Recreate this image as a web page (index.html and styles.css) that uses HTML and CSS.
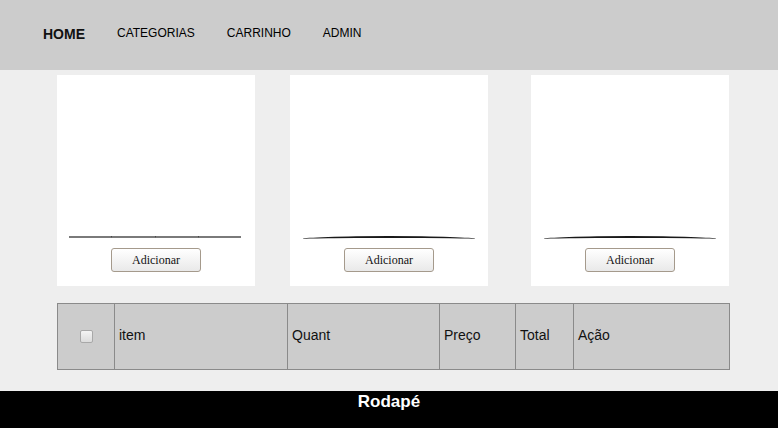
FILE: index.html
```html
<!DOCTYPE html>
<html lang="pt">
<head>
<meta charset="utf-8">
<title>Loja</title>
<link rel="stylesheet" href="styles.css">
</head>
<body>
<header class="topbar">
  <nav class="menu">
    <a class="menu-link menu-home" href="#">HOME</a>
    <a class="menu-link" href="#">CATEGORIAS</a>
    <a class="menu-link" href="#">CARRINHO</a>
    <a class="menu-link" href="#">ADMIN</a>
  </nav>
</header>
<main class="content">
  <section class="products">
    <div class="card">
      <div class="rule-seg">
        <span class="seg"></span><span class="seg tick"></span><span class="seg tick"></span><span class="seg tick"></span>
      </div>
      <button class="add-btn" type="button">Adicionar</button>
    </div>
    <div class="card card-mid">
      <div class="rule-arc"></div>
      <button class="add-btn" type="button">Adicionar</button>
    </div>
    <div class="card card-last">
      <div class="rule-arc"></div>
      <button class="add-btn" type="button">Adicionar</button>
    </div>
  </section>
  <table class="cart">
    <colgroup>
      <col class="c-check"><col class="c-item"><col class="c-qty"><col class="c-price"><col class="c-total"><col class="c-action">
    </colgroup>
    <tr>
      <td class="check-cell"><span class="fake-check"></span></td>
      <td>item</td>
      <td>Quant</td>
      <td>Preço</td>
      <td>Total</td>
      <td>Ação</td>
    </tr>
  </table>
</main>
<footer class="footer">Rodapé</footer>
</body>
</html>
```
FILE: styles.css
```css
html, body {
  margin: 0;
  padding: 0;
}
body {
  background: #eeeeee;
  font-family: "Liberation Sans", Arial, sans-serif;
  color: #000;
}
.topbar {
  background: #cccccc;
  height: 70px;
}
.menu {
  display: flex;
  align-items: flex-start;
  gap: 32px;
  padding: 26px 0 0 43px;
}
.menu-link {
  color: #000;
  text-decoration: none;
  font-size: 12px;
  line-height: 15px;
}
.menu-home {
  font-size: 14px;
  font-weight: bold;
  line-height: 16px;
  color: #111;
}
.content {
  width: 672px;
  margin: 0 0 0 57px;
  padding-top: 5px;
}
.products {
  display: flex;
}
.card {
  width: 198px;
  height: 211px;
  background: #fff;
  box-sizing: border-box;
  padding: 0 13px 14px;
  display: flex;
  flex-direction: column;
  justify-content: flex-end;
  align-items: center;
}
.card-mid {
  margin-left: 35px;
}
.card-last {
  margin-left: auto;
}
.rule-seg {
  display: flex;
  width: 172px;
  margin: 0 1px 10px -1px;
}
.seg {
  flex: 1;
  height: 0;
  border-bottom: 2px solid #7a7a7a;
}
.tick {
  border-left: 1px solid #3a3a3a;
}
.rule-arc {
  width: 172px;
  height: 2px;
  border-top: 2px solid #1a1a1a;
  border-radius: 86px 86px 0 0 / 3px 3px 0 0;
  margin-bottom: 8px;
}
.add-btn {
  width: 90px;
  height: 24px;
  border: 1px solid #a59a8c;
  border-radius: 3px;
  background: linear-gradient(#ffffff, #e9e9e9);
  font-family: "Liberation Serif", "Times New Roman", serif;
  font-size: 12px;
  color: #111;
  padding: 0;
}
.cart {
  margin-top: 17px;
  width: 672px;
  table-layout: fixed;
  border-collapse: collapse;
  background: #cccccc;
  border: 1px solid #8a8a8a;
}
.c-check { width: 57px; }
.c-item { width: 173px; }
.c-qty { width: 152px; }
.c-price { width: 76px; }
.c-total { width: 58px; }
.c-action { width: 156px; }
.cart td {
  height: 61px;
  border: 1px solid #8a8a8a;
  padding: 0 0 4px 4px;
  font-size: 14px;
  color: #111;
}
.cart td.check-cell {
  padding: 0 0 4px;
  text-align: center;
}
.fake-check {
  display: inline-block;
  width: 11px;
  height: 11px;
  border: 1px solid #a8a8a8;
  border-radius: 2px;
  background: linear-gradient(#f4f4f4, #dcdcdc);
  vertical-align: middle;
  margin-left: 1px;
  margin-top: 1px;
}
.footer {
  margin-top: 21px;
  background: #000;
  color: #fff;
  text-align: center;
  font-weight: bold;
  font-size: 17px;
  padding: 1px 0 20px;
}
```
